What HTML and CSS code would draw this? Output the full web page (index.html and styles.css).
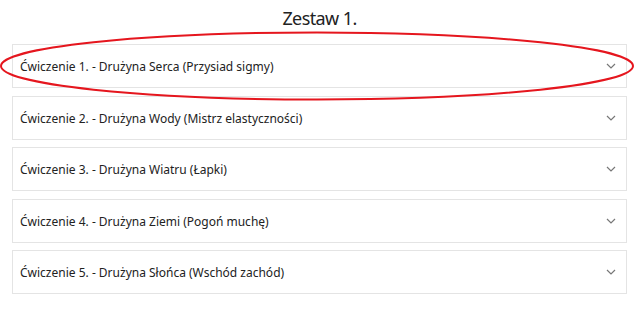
FILE: index.html
```html
<!DOCTYPE html>
<html lang="pl">
  <head>
    <meta charset="UTF-8" />
    <meta name="viewport" content="width=device-width, initial-scale=1.0" />
    <title>Zestaw 1.</title>
    <link rel="stylesheet" href="styles.css">
  </head>
  <body>
    <h1 class="title">Zestaw 1.</h1>
    <div class="accordion">
      <div class="item">
        <span class="label">Ćwiczenie 1. - Drużyna Serca (Przysiad sigmy)</span>
        <svg class="chevron" width="10" height="6" viewBox="0 0 10 6"><path d="M1 1l4 4 4-4" fill="none" stroke="#777" stroke-width="1.2"/></svg>
      </div>
      <div class="item">
        <span class="label">Ćwiczenie 2. - Drużyna Wody (Mistrz elastyczności)</span>
        <svg class="chevron" width="10" height="6" viewBox="0 0 10 6"><path d="M1 1l4 4 4-4" fill="none" stroke="#777" stroke-width="1.2"/></svg>
      </div>
      <div class="item">
        <span class="label">Ćwiczenie 3. - Drużyna Wiatru (Łapki)</span>
        <svg class="chevron" width="10" height="6" viewBox="0 0 10 6"><path d="M1 1l4 4 4-4" fill="none" stroke="#777" stroke-width="1.2"/></svg>
      </div>
      <div class="item">
        <span class="label">Ćwiczenie 4. - Drużyna Ziemi (Pogoń muchę)</span>
        <svg class="chevron" width="10" height="6" viewBox="0 0 10 6"><path d="M1 1l4 4 4-4" fill="none" stroke="#777" stroke-width="1.2"/></svg>
      </div>
      <div class="item">
        <span class="label">Ćwiczenie 5. - Drużyna Słońca (Wschód zachód)</span>
        <svg class="chevron" width="10" height="6" viewBox="0 0 10 6"><path d="M1 1l4 4 4-4" fill="none" stroke="#777" stroke-width="1.2"/></svg>
      </div>
    </div>
    <svg class="mark" width="639" height="110" viewBox="0 0 639 110">
      <ellipse cx="317" cy="36" rx="316" ry="33.5" fill="none" stroke="#e5161e" stroke-width="2"/>
    </svg>
  </body>
</html>
```

FILE: styles.css
```css
body {
  font-family: "Noto Sans", sans-serif;
  background: #fff;
  color: #222;
  margin: 0;
  padding: 0 12px;
}
.title {
  margin: 0;
  padding-top: 6px;
  height: 44px;
  box-sizing: border-box;
  text-align: center;
  font-size: 18px;
  font-weight: normal;
  letter-spacing: -0.6px;
  line-height: 24px;
}
.accordion {
  display: flex;
  flex-direction: column;
  gap: 7.5px;
}
.item {
  height: 44px;
  box-sizing: border-box;
  border: 1px solid #e4e4e4;
  display: flex;
  align-items: center;
  justify-content: space-between;
  padding: 0 10px 0 7px;
}
.label {
  font-size: 12px;
  padding-top: 1px;
}
.chevron {
  display: block;
}
.mark {
  position: absolute;
  left: 0;
  top: 30px;
}
```
